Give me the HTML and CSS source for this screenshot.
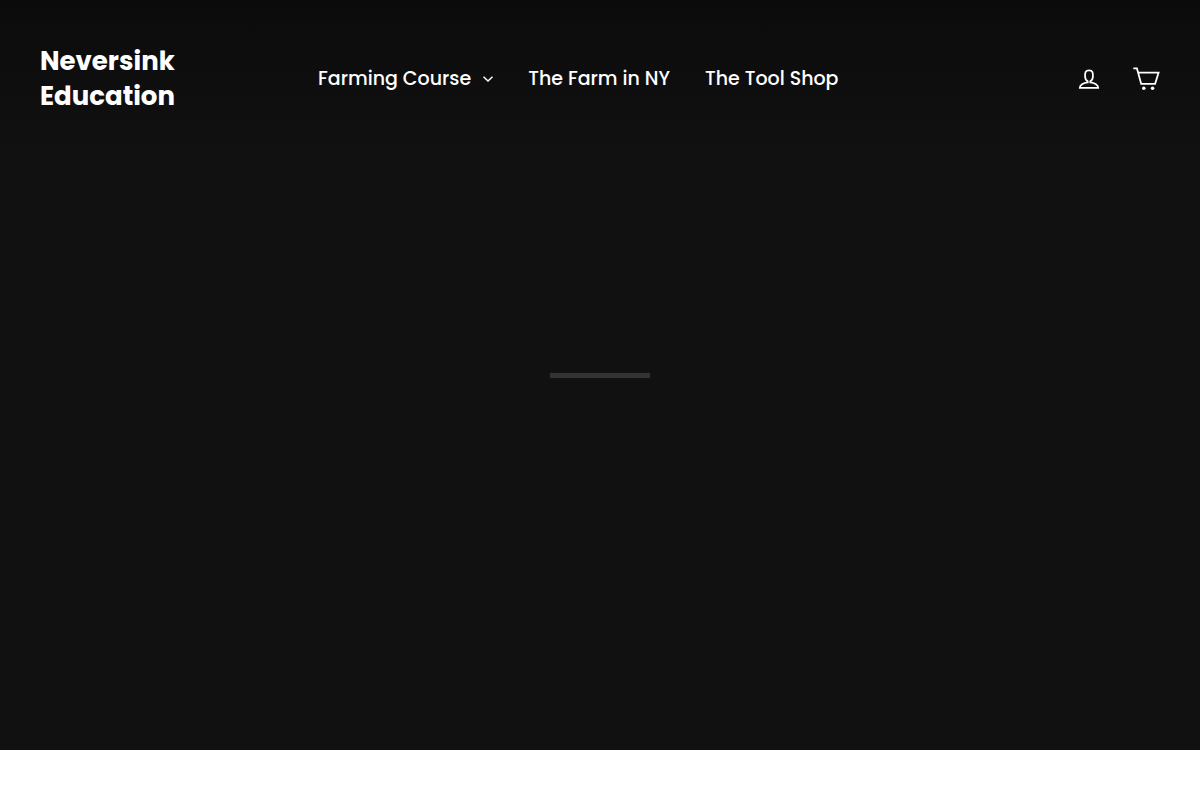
FILE: index.html
```
<!DOCTYPE html>
<html lang="en">
  <head>
    <meta charset="utf-8" />
    <title>Neversink Education</title>
    <meta name="viewport" content="width=device-width, initial-scale=1" />
    <link rel="stylesheet" href="styles.css">
  </head>
  <body>
    <div class="hero">
      <header class="site-header">
        <a class="site-logo" href="#">Neversink Education</a>
        <nav class="site-nav">
          <ul class="nav-list">
            <li>
              <a class="nav-link" href="#" aria-haspopup="true">
                Farming Course
                <svg class="icon-chevron" viewBox="0 0 10 6" aria-hidden="true">
                  <path d="M.5.7l4.5 4.3 4.5-4.3" />
                </svg>
              </a>
            </li>
            <li><a class="nav-link" href="#">The Farm in NY</a></li>
            <li><a class="nav-link" href="#">The Tool Shop</a></li>
          </ul>
        </nav>
        <div class="header-icons">
          <a class="icon-link" href="#" aria-label="Log in">
            <svg class="icon" viewBox="0 0 64 64" aria-hidden="true">
              <path d="M35 39.84v-2.53c3.3-1.91 6-6.66 6-11.41 0-7.63 0-13.82-9-13.82s-9 6.19-9 13.82c0 4.75 2.7 9.51 6 11.41v2.53c-10.18.85-18 6-18 12.16h42c0-6.19-7.82-11.31-18-12.16z" />
            </svg>
          </a>
          <a class="icon-link" href="#" aria-label="Cart">
            <svg class="icon" viewBox="0 0 64 64" aria-hidden="true">
              <path d="M14 17.44h46.79l-7.94 25.61H20.96l-9.65-35.1H3" />
              <circle class="wheel" cx="27" cy="53" r="4" />
              <circle class="wheel" cx="47" cy="53" r="4" />
            </svg>
          </a>
        </div>
      </header>
      <main class="hero-loading">
        <div class="loading-bar"></div>
      </main>
    </div>
  </body>
</html>
```
FILE: styles.css
```
body {
  margin: 0;
  background: #fff;
  color: #fff;
  font-family: Poppins, Inter, sans-serif;
}
a {
  color: inherit;
  text-decoration: none;
}

.hero {
  display: grid;
  min-height: 750px;
  background: #111;
}
.site-header,
.hero-loading {
  grid-area: 1 / 1;
}
.site-header {
  display: flex;
  align-items: center;
  align-self: start;
  box-sizing: border-box;
  min-height: 157px;
  padding: 0 40px;
  background: linear-gradient(#0b0b0b, #111);
}
.site-logo {
  flex: 0 0 160px;
  margin-right: 118px;
  font-size: 26px;
  font-weight: 700;
  line-height: 35px;
}

.site-nav {
  flex: 1;
}
.nav-list {
  display: flex;
  gap: 35px;
  margin: 0;
  padding: 0;
  list-style: none;
}
.nav-link {
  display: flex;
  align-items: center;
  gap: 12px;
  font-size: 19px;
  font-weight: 500;
  line-height: 28px;
  white-space: nowrap;
}
.icon-chevron {
  width: 10px;
  height: 6px;
  fill: none;
  stroke: #fff;
  stroke-width: 1.5;
}

.header-icons {
  display: flex;
  gap: 29px;
}
.icon-link {
  display: flex;
}
.icon {
  width: 28px;
  height: 28px;
  fill: none;
  stroke: #fff;
  stroke-width: 4;
}
.wheel {
  fill: #fff;
  stroke: none;
}

.hero-loading {
  display: flex;
  align-items: center;
  justify-content: center;
}
.loading-bar {
  width: 100px;
  height: 5px;
  background: #333;
}
```
